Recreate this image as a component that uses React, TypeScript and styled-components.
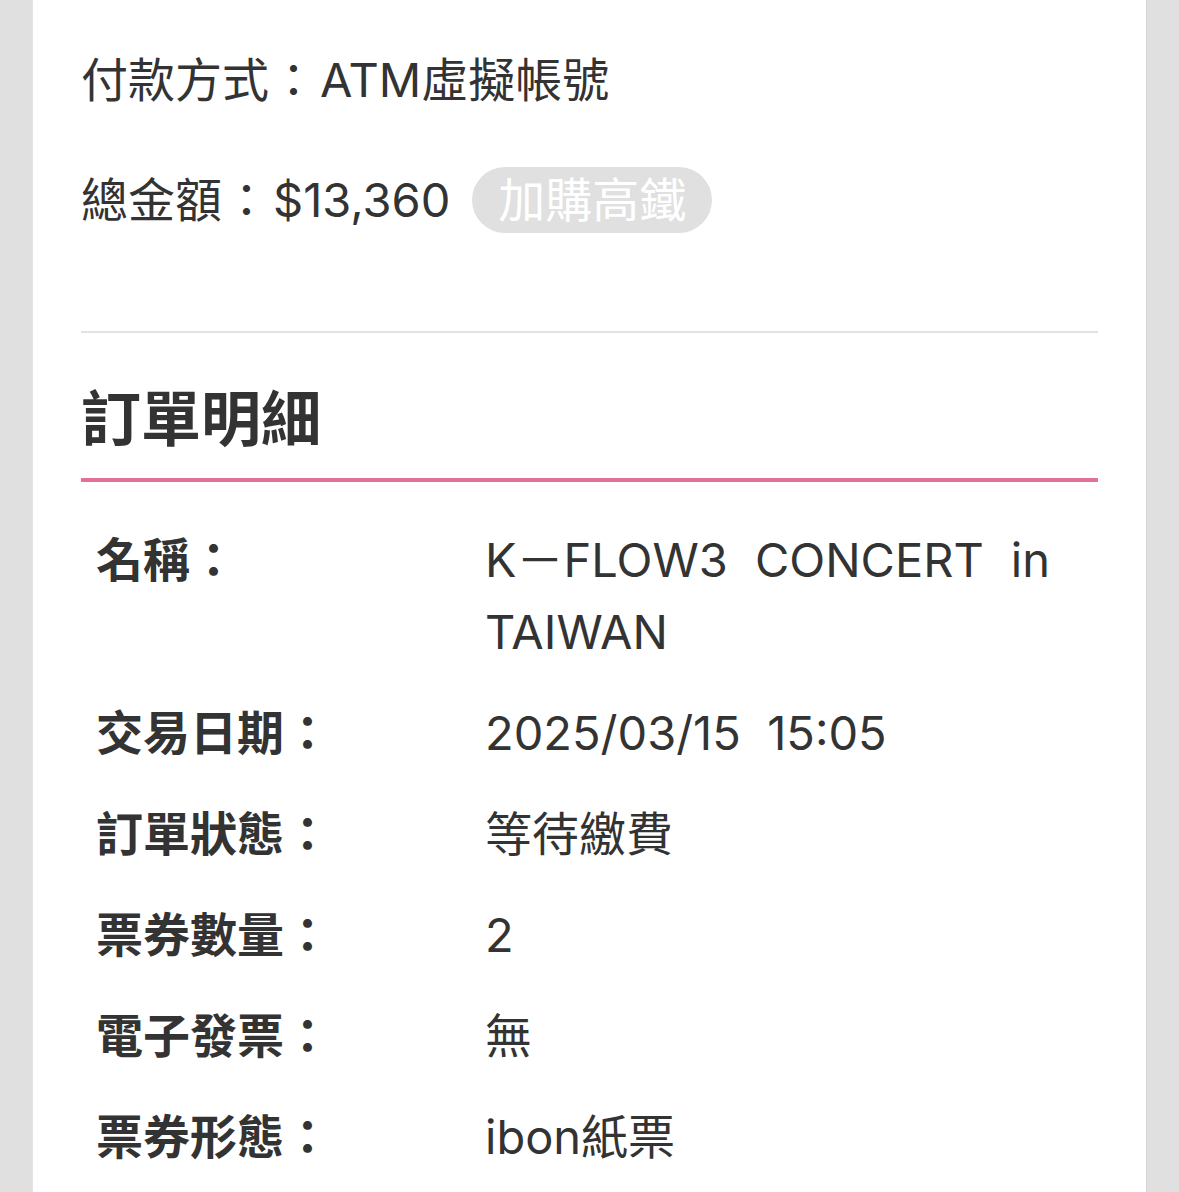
import React from "react";
import styled, { createGlobalStyle } from "styled-components";

const Global = createGlobalStyle`
  html, body {
    margin: 0;
    padding: 0;
    background: #e0e0e0;
  }
  body {
    font-family: Inter, "Noto Sans CJK TC", "Noto Sans", sans-serif;
    color: #333333;
    -webkit-font-smoothing: antialiased;
  }
`;

const Page = styled.div`
  display: flex;
  justify-content: center;
  padding: 0 33px;
  min-height: 1192px;
  box-sizing: border-box;
`;

const Card = styled.main`
  flex: 1;
  background: #ffffff;
  padding: 44px 48px 0;
  box-shadow: 1px 0 0 #d6d6da, -1px 0 0 #e4e4e6;
  display: flex;
  flex-direction: column;
`;

const InfoLine = styled.div<{ $mt?: number }>`
  display: flex;
  align-items: center;
  height: 72px;
  margin-top: ${(p) => p.$mt ?? 0}px;
  font-size: 47px;
  line-height: 72px;
  white-space: nowrap;
`;

const Sep = styled.span`
  display: inline-block;
  margin: 0 3px 0 1px;
`;

const Pill = styled.span`
  display: inline-flex;
  align-items: center;
  height: 66px;
  padding: 0 26px;
  margin-left: 22px;
  border-radius: 33px;
  background: #e0e0e0;
  color: #ffffff;
  font-size: 47px;
`;

const Divider = styled.hr`
  border: 0;
  height: 2px;
  background: #e2e2e2;
  margin: 95px 0 0;
`;

const Heading = styled.h2`
  margin: 50px 0 0;
  font-size: 60px;
  font-weight: 700;
  line-height: 72px;
  height: 72px;
`;

const AccentBar = styled.div`
  height: 4px;
  background: #e2709a;
  margin-top: 23px;
`;

const Table = styled.dl`
  margin: 42px 0 0;
  display: flex;
  flex-direction: column;
  gap: 29px;
`;

const Row = styled.div`
  display: grid;
  grid-template-columns: 389px 565px;
  padding-left: 15px;
  font-size: 47px;
  line-height: 72px;
`;

const Label = styled.dt`
  margin: 0;
  font-weight: 700;
`;

const Value = styled.dd`
  margin: 0;
  text-align: justify;
  white-space: pre-wrap;
`;

const rows: [string, string][] = [
  ["名稱：", "K－FLOW3 CONCERT in TAIWAN"],
  ["交易日期：", "2025/03/15  15:05"],
  ["訂單狀態：", "等待繳費"],
  ["票券數量：", "2"],
  ["電子發票：", "無"],
  ["票券形態：", "ibon紙票"],
];

export default function App() {
  return (
    <>
      <Global />
      <Page>
        <Card>
          <InfoLine>
            付款方式<Sep>：</Sep>ATM虛擬帳號
          </InfoLine>
          <InfoLine $mt={48}>
            總金額<Sep>：</Sep>$13,360
            <Pill>加購高鐵</Pill>
          </InfoLine>
          <Divider />
          <Heading>訂單明細</Heading>
          <AccentBar />
          <Table>
            {rows.map(([k, v]) => (
              <Row key={k}>
                <Label>{k}</Label>
                <Value>{v}</Value>
              </Row>
            ))}
          </Table>
        </Card>
      </Page>
    </>
  );
}
